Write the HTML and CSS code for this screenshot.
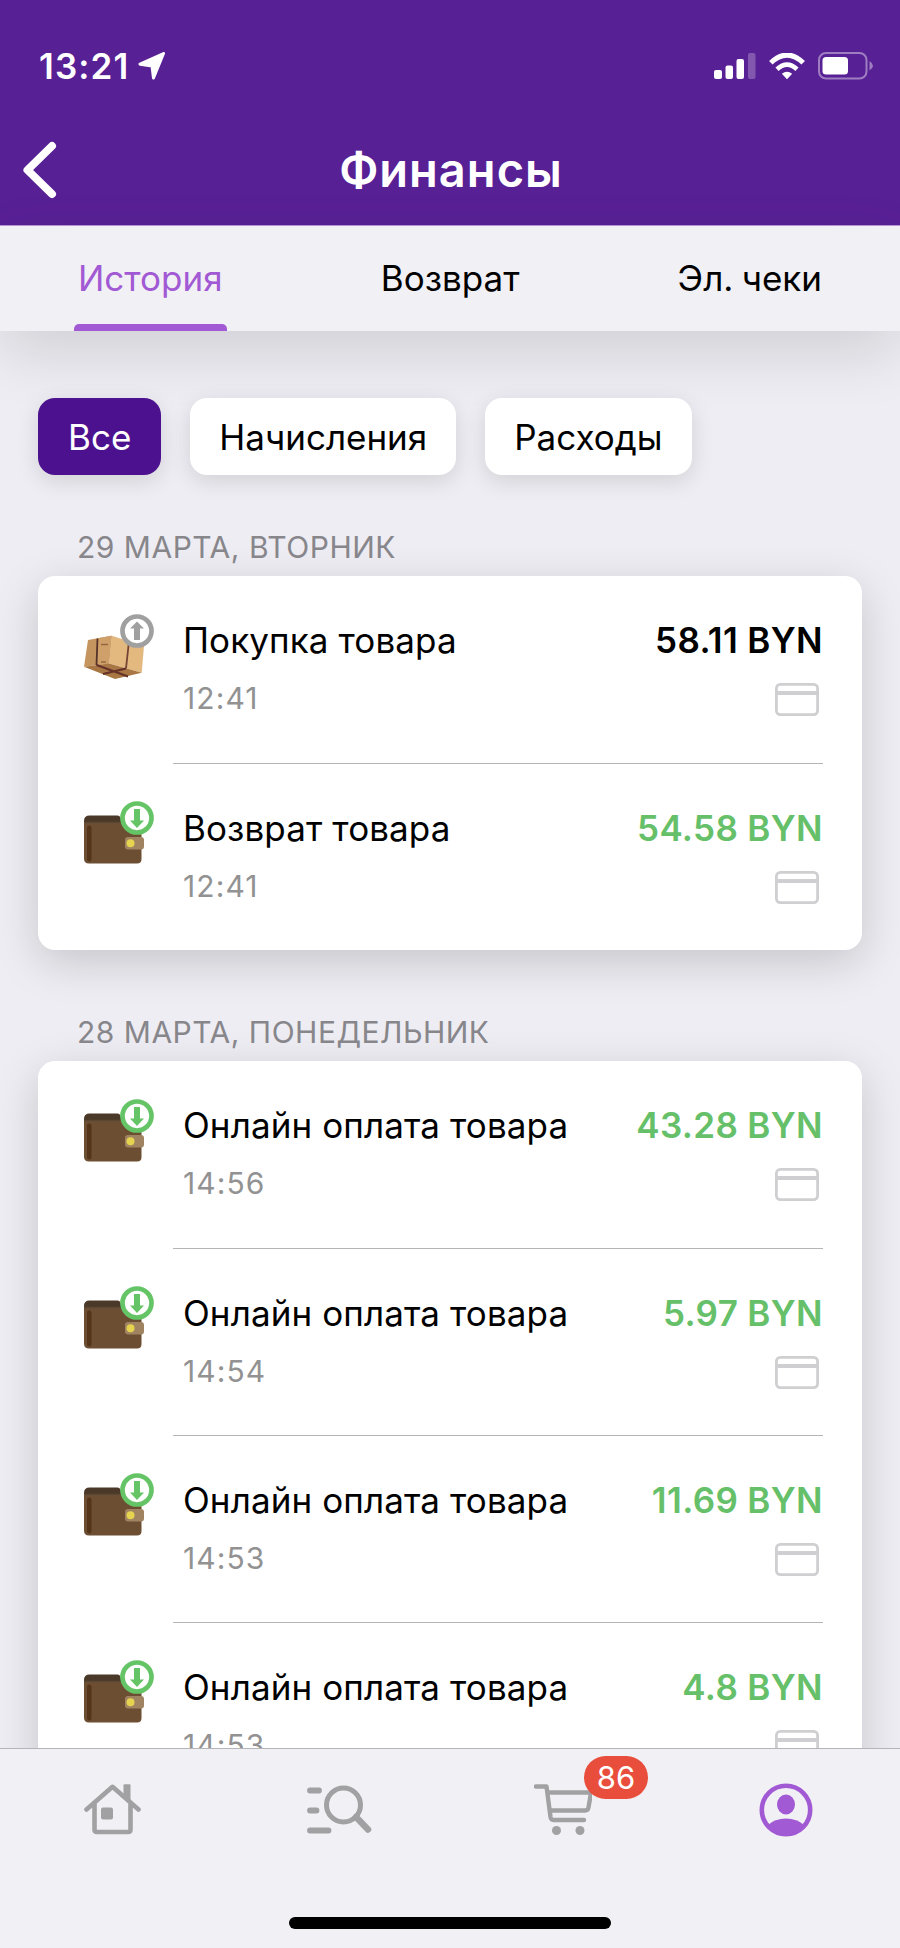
FILE: index.html
```html
<!DOCTYPE html>
<html lang="ru">
<head>
  <meta charset="UTF-8">
  <title>Финансы</title>
  <meta name="viewport" content="width=device-width, initial-scale=1.0">
  <link rel="stylesheet" href="styles.css">
</head>
<body>
  <svg class="sprite">
    <symbol id="wallet" viewBox="0 0 72 66">
      <path d="M0 20q0-5.500 5.500-5.500H33q4 0 4 5V26H0z" fill="#4a3829"/>
      <path d="M0 21.500H53q4.500 0 4.500 4.500V58q0 4.500-4.500 4.500H5Q0 62.500 0 57.500z" fill="#6c4f33"/>
      <path d="M0 21.500H36" stroke="#5b4734" stroke-width="1.500"/>
      <rect x="3" y="24.500" width="4.500" height="36" rx="2" fill="#553519"/>
      <rect x="41" y="36" width="19" height="12.500" rx="3" fill="#a08462"/>
      <circle cx="46.500" cy="42.300" r="4" fill="#e6d450"/>
      <circle cx="53" cy="17" r="14.500" fill="#fff" stroke="#65c466" stroke-width="4.700"/>
      <path d="M50 8h6v11.500h4L53 27l-7-7.500h4z" fill="#65c466"/>
    </symbol>
    <symbol id="box" viewBox="0 0 72 66">
      <path d="M4 26L27.700 21.700 25 49.500 0 52.700z" fill="#c4955f"/>
      <path d="M27.700 21.700L60 32 57.700 58.700 25 49.500z" fill="#e3b980"/>
      <path d="M13.500 24.300L27.700 21.700 25 49.500 12.500 51z" fill="#cfa069"/>
      <path d="M0 52.700L25 49.500 57.700 58.700 31 65z" fill="#a87744"/>
      <path d="M13.500 24.500L12.500 51" stroke="#553329" stroke-width="1.800"/>
      <path d="M45 27L42 54.500" stroke="#754436" stroke-width="1.800"/>
      <path d="M12.500 51L44 62.500M42 54.500L19 60" fill="none" stroke="#653129" stroke-width="2"/>
      <path d="M17 30.500h7M17 48h5" stroke="#93683f" stroke-width="1.500"/>
      <circle cx="53" cy="17" r="14.500" fill="#fff" stroke="#a0a0a1" stroke-width="4.700"/>
      <path d="M50 26h6V14.500h4L53 7.500l-7 7h4z" fill="#a0a0a1"/>
    </symbol>
    <symbol id="bankcard" viewBox="0 0 44 33">
      <rect x="1.400" y="1.400" width="41.200" height="30.200" rx="4" fill="none" stroke="#cfcfd1" stroke-width="2.800"/>
      <path d="M2 10H42" stroke="#cfcfd1" stroke-width="4"/>
    </symbol>
  </svg>

  <div class="screen">
    <header class="header">
      <div class="status">
        <span class="clock">13:21</span>
        <svg class="location" width="28" height="28" viewBox="0 0 28 28"><path d="M25.500 1.500L2 12.200 14 14 15.500 26z" fill="#fff" stroke="#fff" stroke-width="3" stroke-linejoin="round"/></svg>
        <svg class="signal" width="42" height="26" viewBox="0 0 42 26" fill="#fff">
          <rect x="0" y="17" width="8" height="9" rx="2"/>
          <rect x="11.500" y="12.500" width="7.500" height="13.500" rx="2"/>
          <rect x="22.500" y="6" width="7.500" height="20" rx="2"/>
          <rect x="34" y="0" width="7.500" height="26" rx="2" opacity=".25"/>
        </svg>
        <svg class="wifi" width="36" height="27" viewBox="0 0 36 27" fill="none" stroke="#fff">
          <path d="M1.800 9.800Q18-5.600 34.200 9.800" stroke-width="5"/>
          <path d="M8 16.200Q18 7 28 16.200" stroke-width="4.600"/>
          <path d="M12.800 20.800Q18 16.500 23.200 20.800L18 26.300z" fill="#fff" stroke="none"/>
        </svg>
        <svg class="battery" width="56" height="28" viewBox="0 0 56 28">
          <rect x="1" y="1" width="47.500" height="25.500" rx="7" fill="none" stroke="#fff" stroke-opacity=".42" stroke-width="2"/>
          <rect x="4.500" y="5" width="25.500" height="17.500" rx="3.500" fill="#fff"/>
          <path d="M51.500 9q7 4.700 0 9.500z" fill="#fff" opacity=".42"/>
        </svg>
      </div>
      <div class="titlebar">
        <svg class="back" width="34" height="58" viewBox="0 0 34 58"><path d="M29 5L4.500 29 29 53" fill="none" stroke="#fff" stroke-width="8" stroke-linecap="round" stroke-linejoin="round"/></svg>
        <h1>Финансы</h1>
      </div>
    </header>

    <nav class="tabs">
      <a class="tab active">История</a>
      <a class="tab">Возврат</a>
      <a class="tab">Эл. чеки</a>
    </nav>

    <main class="content">
      <div class="filters">
        <button class="filter selected">Все</button>
        <button class="filter">Начисления</button>
        <button class="filter">Расходы</button>
      </div>

      <h2>29 МАРТА, ВТОРНИК</h2>
      <div class="card">
        <div class="operation">
          <svg class="pic"><use href="#box"/></svg>
          <div class="details">
            <div class="line"><span class="name">Покупка товара</span><span class="sum">58.11 BYN</span></div>
            <div class="line"><span class="time">12:41</span><svg class="bankcard"><use href="#bankcard"/></svg></div>
          </div>
        </div>
        <div class="operation">
          <svg class="pic"><use href="#wallet"/></svg>
          <div class="details">
            <div class="line"><span class="name">Возврат товара</span><span class="sum plus">54.58 BYN</span></div>
            <div class="line"><span class="time">12:41</span><svg class="bankcard"><use href="#bankcard"/></svg></div>
          </div>
        </div>
      </div>

      <h2>28 МАРТА, ПОНЕДЕЛЬНИК</h2>
      <div class="card">
        <div class="operation">
          <svg class="pic"><use href="#wallet"/></svg>
          <div class="details">
            <div class="line"><span class="name">Онлайн оплата товара</span><span class="sum plus">43.28 BYN</span></div>
            <div class="line"><span class="time">14:56</span><svg class="bankcard"><use href="#bankcard"/></svg></div>
          </div>
        </div>
        <div class="operation">
          <svg class="pic"><use href="#wallet"/></svg>
          <div class="details">
            <div class="line"><span class="name">Онлайн оплата товара</span><span class="sum plus">5.97 BYN</span></div>
            <div class="line"><span class="time">14:54</span><svg class="bankcard"><use href="#bankcard"/></svg></div>
          </div>
        </div>
        <div class="operation">
          <svg class="pic"><use href="#wallet"/></svg>
          <div class="details">
            <div class="line"><span class="name">Онлайн оплата товара</span><span class="sum plus">11.69 BYN</span></div>
            <div class="line"><span class="time">14:53</span><svg class="bankcard"><use href="#bankcard"/></svg></div>
          </div>
        </div>
        <div class="operation">
          <svg class="pic"><use href="#wallet"/></svg>
          <div class="details">
            <div class="line"><span class="name">Онлайн оплата товара</span><span class="sum plus">4.8 BYN</span></div>
            <div class="line"><span class="time">14:53</span><svg class="bankcard"><use href="#bankcard"/></svg></div>
          </div>
        </div>
      </div>
    </main>

    <footer class="bottom">
      <div class="menu">
        <a class="menu-item">
          <svg width="58" height="52" viewBox="0 0 58 52" fill="none" stroke="#a1a1a3" stroke-width="4.600" stroke-linecap="round" stroke-linejoin="round">
            <path d="M2.500 25.500L28.500 2.800 54.500 25.500M10.500 20V45.500q0 2.500 2.500 2.500H44q2.500 0 2.500-2.500V20"/>
            <path d="M39.500 11V1.200q0-1 1-1h5q1 0 1 1V18z" fill="#a1a1a3" stroke="none"/>
            <rect x="17" y="23.500" width="12" height="12" rx="2" fill="#a1a1a3" stroke="none"/>
          </svg>
        </a>
        <a class="menu-item search">
          <svg width="66" height="50" viewBox="0 0 66 50" fill="none" stroke="#a1a1a3" stroke-linecap="round">
            <path d="M3 5.500H12M3 25.500H9.500M3 45.500H21.500" stroke-width="5.800"/>
            <circle cx="36.500" cy="20" r="17" stroke-width="5"/>
            <path d="M49 32L61 44.500" stroke-width="6.500"/>
          </svg>
        </a>
        <a class="menu-item">
          <svg width="58" height="52" viewBox="0 0 58 52" fill="none" stroke="#a1a1a3" stroke-width="4.400" stroke-linecap="round" stroke-linejoin="round">
            <path d="M2 2.500H12.500L16.500 33q.5 3 3 3H50"/>
            <path d="M14.500 8.500H57L54.500 23.500q-.5 3-3.500 3H17"/>
            <circle cx="22.500" cy="46.500" r="4.500" fill="#a1a1a3" stroke="none"/>
            <circle cx="46" cy="46.500" r="4.500" fill="#a1a1a3" stroke="none"/>
          </svg>
          <span class="badge">86</span>
        </a>
        <a class="menu-item profile">
          <svg width="54" height="54" viewBox="0 0 54 54">
            <circle cx="27" cy="27" r="24.200" fill="none" stroke="#a259d4" stroke-width="4.600"/>
            <ellipse cx="27" cy="21.500" rx="9" ry="10" fill="#a259d4"/>
            <path d="M9 42q7-6.500 18-6.500T45 42Q38 51.500 27 51.500T9 42z" fill="#a259d4"/>
          </svg>
        </a>
      </div>
      <div class="home-bar"></div>
    </footer>
  </div>
</body>
</html>
```
FILE: styles.css
```css
* {
  box-sizing: border-box;
}

body {
  margin: 0;
  font-family: Inter, "Liberation Sans", sans-serif;
  font-size: 35px;
  color: #000;
  background-color: #eeedf3;
}

.sprite {
  display: none;
}

.screen {
  display: flex;
  flex-direction: column;
  width: 900px;
  height: 1948px;
  overflow: hidden;
}

/* header */
.header {
  flex: none;
  height: 226px;
  padding-top: 40px;
  color: #fff;
  background-color: #582095;
  border-bottom: 1px solid #b897d8;
}

.status {
  display: flex;
  align-items: center;
  height: 52px;
  padding: 0 26px 0 39px;
}

.clock {
  font-weight: 600;
  letter-spacing: 1.1px;
}

.location {
  margin-left: 9px;
}

.signal {
  margin-left: auto;
}

.wifi {
  margin-left: 13px;
}

.battery {
  margin-left: 13px;
}

.titlebar {
  display: grid;
  grid-template-columns: 60px 1fr 60px;
  align-items: center;
  height: 70px;
  margin-top: 43px;
  padding: 0 21px 0 23px;
}

h1 {
  margin: 0;
  font-size: 47px;
  font-weight: 600;
  line-height: 58px;
  letter-spacing: 1px;
  text-align: center;
}

/* tabs */
.tabs {
  display: flex;
  flex: none;
  justify-content: space-between;
  height: 105px;
  padding: 0 74px;
  background-color: #f1f0f5;
  box-shadow: 0 22px 60px rgba(0, 0, 0, 0.12);
}

.tab {
  padding: 30px 4px 0;
  line-height: 44px;
  word-spacing: -1.5px;
}

.tab.active {
  color: #a259d4;
}

.tab.active::after {
  content: "";
  display: block;
  height: 7px;
  margin: 24px -4px 0;
  border-radius: 5px 5px 0 0;
  background-color: #a259d4;
}

/* content */
.content {
  flex: 1;
  min-height: 0;
  padding: 67px 38px 0;
  overflow: hidden;
}

.filters {
  display: flex;
  gap: 29px;
}

.filter {
  height: 77px;
  padding: 0 29px;
  border: none;
  border-radius: 17px;
  font-family: inherit;
  font-size: 35px;
  color: #000;
  background-color: #fff;
  box-shadow: 0 6px 22px rgba(0, 0, 0, 0.12);
}

.filter.selected {
  padding: 0 30px;
  color: #fff;
  background-color: #4c118f;
}

h2 {
  margin: 54px 39px 11px;
  font-size: 30px;
  font-weight: 400;
  line-height: 36px;
  letter-spacing: 0.5px;
  color: #87868b;
}

.card {
  border-radius: 17px;
  background-color: #fff;
  box-shadow: 0 12px 44px rgba(0, 0, 0, 0.17);
}

.card + h2 {
  margin-top: 64px;
}

.operation {
  display: flex;
  height: 187px;
  padding: 0 39px 0 46px;
}

.pic {
  flex: none;
  width: 72px;
  height: 66px;
  margin: 38px 17px 0 0;
}

.details {
  flex: 1;
  padding: 42px 0 0 10px;
}

.operation + .operation .details {
  border-top: 1px solid #b5b5b7;
}

.line {
  display: flex;
  justify-content: space-between;
  line-height: 44px;
  white-space: nowrap;
}

.line + .line {
  margin-top: 18px;
  line-height: 36px;
}

.name {
  letter-spacing: 0.1px;
}

.sum {
  font-weight: 600;
  letter-spacing: 0.35px;
}

.plus {
  color: #66c069;
}

.time {
  font-size: 30px;
  letter-spacing: 1.1px;
  color: #929293;
}

.bankcard {
  width: 44px;
  height: 33px;
  margin: 3px 4px 0 0;
}

/* bottom menu */
.bottom {
  display: flex;
  flex: none;
  flex-direction: column;
  justify-content: space-between;
  height: 200px;
  padding-bottom: 19px;
  background-color: #f1f0f5;
  border-top: 1px solid #b5b4b9;
}

.menu {
  display: grid;
  grid-template-columns: repeat(4, 225px);
  height: 122px;
}

.menu-item {
  display: flex;
  align-items: center;
  justify-content: center;
  position: relative;
}

.search {
  padding-left: 4px;
}

.profile {
  padding: 0 3px 1px 0;
}

.badge {
  position: absolute;
  top: 7px;
  left: 134px;
  width: 64px;
  height: 43px;
  border-radius: 22px;
  font-size: 31px;
  line-height: 43px;
  text-align: center;
  color: #fff;
  background-color: #e94e3c;
}

.home-bar {
  align-self: center;
  width: 322px;
  height: 12px;
  border-radius: 6px;
  background-color: #000;
}
```
